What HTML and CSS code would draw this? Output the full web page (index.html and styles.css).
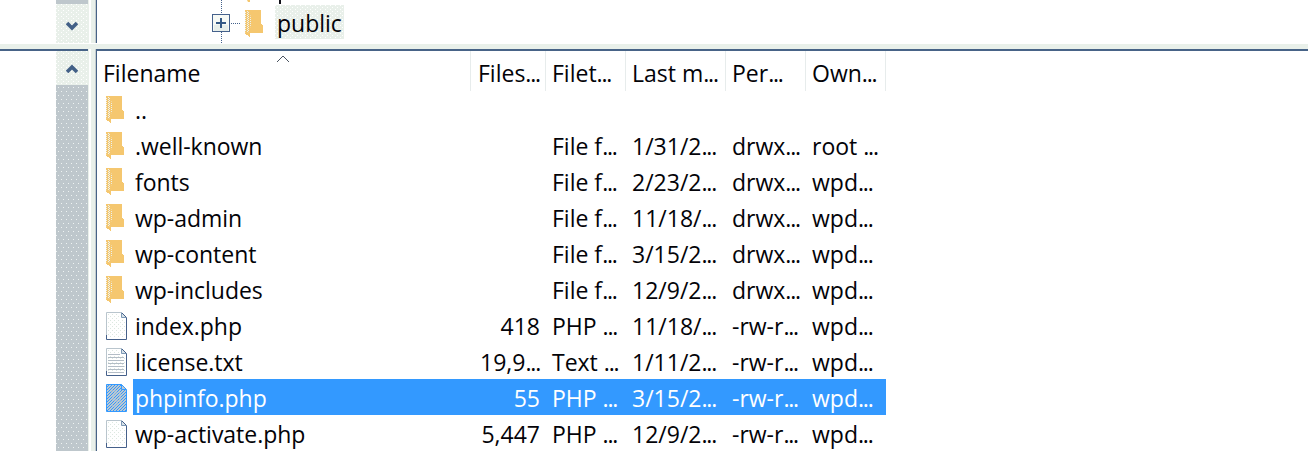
FILE: index.html
```html
<!DOCTYPE html>
<html lang="en">
<head>
<meta charset="utf-8">
<title>Remote files</title>
<link rel="stylesheet" href="styles.css">
</head>
<body>
<svg class="defs" width="0" height="0">
  <defs>
    <pattern id="dots" width="4" height="4" patternUnits="userSpaceOnUse"><path d="M0 0h1v1h-1zM2 2h1v1h-1z" fill="#dce8e0"/></pattern>
    <pattern id="pale" width="3" height="2" patternUnits="userSpaceOnUse"><path d="M0 0h1v1h-1zM2 1h1v1h-1z" fill="#eaf3f3"/></pattern>
    <pattern id="blue" width="3" height="3" patternUnits="userSpaceOnUse"><path d="M0 0h1v1h-1zM2 1h1v1h-1zM1 2h1v1h-1z" fill="#3399ff"/></pattern>
    <symbol id="folder" viewBox="0 0 19 27"><path d="M0 0H16V14H17V15H18V23H5V27H4V26H3V25H1V24H0Z" fill="#f5c76f"/><path d="M0 1H3L5 4L6 8V15L5 18L4 22L2 23L0 22Z" fill="url(#pale)"/></symbol>
    <symbol id="file" viewBox="0 0 21 28"><path d="M.5 .5H15.5L20.5 5.5V27.5H.5Z" fill="#fff"/><path d="M2 2H14V7H19V26H2Z" fill="url(#dots)"/><path d="M.5 24V.5H15.5" fill="none" stroke="#b9c5cd"/><path d="M15.5 .5V5.5H20" fill="#d8e2e8" stroke="#7c98b5"/><path d="M16 1L20.5 5.5V27.5H.5V23" fill="none" stroke="#45608a"/></symbol>
    <symbol id="textfile" viewBox="0 0 21 28"><use href="#file"/><path d="M2 6.5H14M2 9.5H18M2 12.5H18M2 15.5H18M2 18.5H18M2 21.5H18M2 24.5H18" stroke="#b3bdc6"/></symbol>
    <symbol id="selected" viewBox="0 0 21 28"><path d="M.5 .5H15.5L20.5 5.5V27.5H.5Z" fill="#bdc8cf"/><path d="M1 1H15V6H20V27H1Z" fill="url(#blue)"/><path d="M5 7H10V11H7V16H11V22H6M14 8V19H17" fill="none" stroke="#bdc8cf"/><path d="M.5 .5H15.5L20.5 5.5V27.5H.5ZM15.5 .5V5.5H20" fill="none" stroke="#3399ff"/></symbol>
  </defs>
</svg>
<main class="window">
  <div class="upper">
    <div class="side"></div>
    <div class="scroll down"><svg width="12" height="10" viewBox="0 0 12 10"><path d="M1 2L6 7L11 2" /></svg></div>
    <div class="divider"></div>
    <div class="tree">
      <svg class="branch" width="29" height="43" viewBox="0 0 29 43"><path d="M9.5 0V14M9.5 32V43M19 23.5H28" fill="none" stroke="#44618b" stroke-dasharray="1 1"/><rect x=".5" y="14.5" width="17" height="17" fill="#f6f9f5" stroke="#45618c"/><path d="M2 25H16V31H2Z" fill="#e7eeea"/><path d="M4 23H14M9 18V28" stroke="#355985" stroke-width="2"/></svg>
      <svg class="treefolder" width="19" height="43" viewBox="0 0 19 43"><path d="M2 0H5V2H3Z" fill="#f5c76f"/><use href="#folder" y="10" width="19" height="27"/></svg>
      <span class="current"><i class="stem"></i>public</span>
    </div>
  </div>
  <div class="split"></div>
  <div class="lower">
    <div class="side"></div>
    <div class="scroll up"><div class="button"><svg width="12" height="10" viewBox="0 0 12 10"><path d="M1 8L6 3L11 8" /></svg></div></div>
    <div class="divider"></div>
    <div class="list">
      <div class="row head"><div><span>Filename</span><svg class="sort" width="15" height="8" viewBox="0 0 15 8"><path d="M1 7L7 1L13 7" fill="none" stroke="#4a5360"/></svg></div><div>Files<b>...</b></div><div>Filet<b>...</b></div><div>Last m<b>...</b></div><div>Per<b>...</b></div><div>Own<b>...</b></div></div>
      <div class="row"><div><svg class="icon"><use href="#folder" width="19" height="27"/></svg><span class="name">..</span></div><div></div><div></div><div></div><div></div><div></div></div>
      <div class="row"><div><svg class="icon"><use href="#folder" width="19" height="27"/></svg><span class="name">.well-known</span></div><div></div><div>File f<b>...</b></div><div>1/31/2<b>...</b></div><div>drwx<b>...</b></div><div>root <b>...</b></div></div>
      <div class="row"><div><svg class="icon"><use href="#folder" width="19" height="27"/></svg><span class="name">fonts</span></div><div></div><div>File f<b>...</b></div><div>2/23/2<b>...</b></div><div>drwx<b>...</b></div><div>wpd<b>...</b></div></div>
      <div class="row"><div><svg class="icon"><use href="#folder" width="19" height="27"/></svg><span class="name">wp-admin</span></div><div></div><div>File f<b>...</b></div><div>11/18/<b>...</b></div><div>drwx<b>...</b></div><div>wpd<b>...</b></div></div>
      <div class="row"><div><svg class="icon"><use href="#folder" width="19" height="27"/></svg><span class="name">wp-content</span></div><div></div><div>File f<b>...</b></div><div>3/15/2<b>...</b></div><div>drwx<b>...</b></div><div>wpd<b>...</b></div></div>
      <div class="row"><div><svg class="icon"><use href="#folder" width="19" height="27"/></svg><span class="name">wp-includes</span></div><div></div><div>File f<b>...</b></div><div>12/9/2<b>...</b></div><div>drwx<b>...</b></div><div>wpd<b>...</b></div></div>
      <div class="row"><div><svg class="icon"><use href="#file" width="21" height="28"/></svg><span class="name">index.php</span></div><div>418</div><div>PHP <b>...</b></div><div>11/18/<b>...</b></div><div>-rw-r<b>...</b></div><div>wpd<b>...</b></div></div>
      <div class="row"><div><svg class="icon"><use href="#textfile" width="21" height="28"/></svg><span class="name">license.txt</span></div><div>19,9<b>...</b></div><div>Text <b>...</b></div><div>1/11/2<b>...</b></div><div>-rw-r<b>...</b></div><div>wpd<b>...</b></div></div>
      <div class="row active"><div><svg class="icon"><use href="#selected" width="21" height="28"/></svg><span class="name">phpinfo.php</span></div><div>55</div><div>PHP <b>...</b></div><div>3/15/2<b>...</b></div><div>-rw-r<b>...</b></div><div>wpd<b>...</b></div></div>
      <div class="row"><div><svg class="icon"><use href="#file" width="21" height="28"/></svg><span class="name">wp-activate.php</span></div><div>5,447</div><div>PHP <b>...</b></div><div>12/9/2<b>...</b></div><div>-rw-r<b>...</b></div><div>wpd<b>...</b></div></div>
    </div>
  </div>
</main>
</body>
</html>
```
FILE: styles.css
```css
* { box-sizing: border-box; }
body { margin: 0; background: #fff; color: #030308; font: 23px/38px "Open Sans", "Noto Sans", sans-serif; overflow: hidden; }
svg { display: block; flex: none; }
b { font-weight: 400; letter-spacing: -1.2px; }
.defs { position: absolute; }
.window { width: 1308px; height: 451px; display: flex; flex-direction: column; overflow: hidden; }
.upper, .lower { display: grid; grid-template-columns: 56px 32px 8px 1fr; }
.upper { height: 43px; flex: none; }
.lower { height: 402px; flex: none; }
.side { background: #fff; }
.lower .side { border-top: 2px solid #476387; }
.scroll, .button, .current { background: conic-gradient(from 270deg at 1px 1px, #fff 90deg, transparent 0) 0 0 / 5px 4px, conic-gradient(from 270deg at 1px 1px, #fff 90deg, transparent 0) 2px 2px / 5px 4px, #e9f0ea; }
.scroll path { fill: none; stroke: #426087; stroke-width: 3.6; }
.scroll.down { border-top: 4px solid #bec7cc; padding: 17px 0 0 10px; }
.scroll.up { border-top: 2px solid #476387; background: conic-gradient(from 270deg at 1px 1px, #eef3f2 90deg, transparent 0) 0 0 / 5px 8px, conic-gradient(from 270deg at 1px 1px, #eef3f2 90deg, transparent 0) 2px 4px / 5px 8px, #bec7cc; }
.button { height: 34px; padding: 13px 0 0 10px; }
.divider { background: linear-gradient(90deg, #e9f0ea 0 1px, #fff 1px 3px, #e9f0ea 3px 7px, #c4cccd 7px); }
.tree { border-left: 1px solid #476387; display: flex; overflow: hidden; }
.branch { margin-left: 115px; }
.treefolder { margin-left: 4px; }
.current { position: relative; height: 34px; margin: 5px 0 0 11px; padding: 0 0 0 2px; width: 69px; line-height: 36px; }
.stem { position: absolute; left: 4px; top: -5px; width: 2px; height: 4px; background: #101018; }
.split { height: 6px; flex: none; border-top: 1px solid #fff; background: linear-gradient(#e9f0ea, #e9f0ea); }
.list { border: solid #476387; border-width: 2px 0 0 1px; overflow: hidden; }
.row { display: grid; grid-template-columns: 374px 75px 80px 100px 80px 80px; grid-template-rows: 36px; width: 789px; height: 36px; }
.row > div { padding-left: 6px; white-space: nowrap; }
.row > div:nth-child(2) { padding: 0 6px 0 0; text-align: right; }
.row > div:first-child { display: flex; padding-left: 9px; }
.icon { width: 22px; height: 30px; margin: 5px 5px 0 0; }
.name { padding-left: 2px; flex: 1; letter-spacing: -.03px; }
.head { grid-template-rows: 40px; height: 40px; line-height: 44px; }
.head > div { border-right: 1px solid #e7ecec; position: relative; }
.row.head > div:nth-child(2) { text-align: left; padding: 0 0 0 7px; }
.row.head > div:first-child { padding-left: 6px; }
.sort { position: absolute; left: 179px; top: 4px; }
.active { color: #fff; }
.active > div:not(:first-child), .active .name { background: #3399ff; }
```
